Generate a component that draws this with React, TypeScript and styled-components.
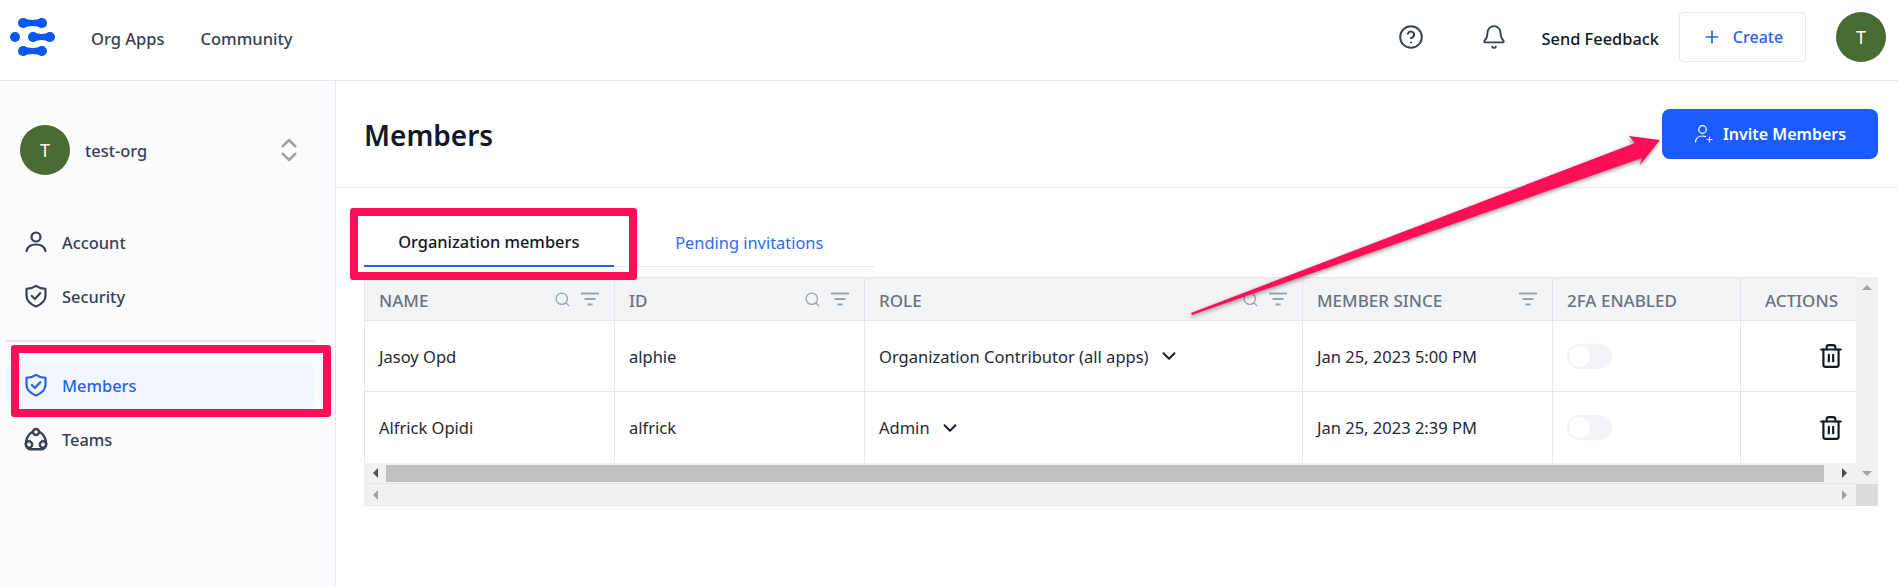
import React from 'react';
import styled, { createGlobalStyle } from 'styled-components';
import { Bell, ChevronDown, ChevronsUpDown, CircleHelp, Plus, Search, Trash2 } from 'lucide-react';

const GlobalStyle = createGlobalStyle`
  html, body {
    margin: 0;
    padding: 0;
    height: 100%;
    overflow: hidden;
    background: #ffffff;
    font-family: 'Noto Sans', 'Liberation Sans', sans-serif;
  }
  * { box-sizing: border-box; }
`;

const Page = styled.div`
  position: relative;
  width: 1898px;
  height: 586px;
  display: flex;
  flex-direction: column;
  overflow: hidden;
`;

const TopBar = styled.header`
  flex: 0 0 81px;
  display: flex;
  align-items: center;
  border-bottom: 1px solid #e5e7eb;
  padding: 0 12px 6px 10px;
`;

const TopLink = styled.a`
  font-size: 16.5px;
  font-weight: 500;
  color: #374151;
  margin-right: 36px;
  padding-top: 2px;
`;

const LogoSlot = styled.div`
  width: 81px;
  height: 44px;
  display: flex;
  align-items: center;
`;

const Spacer = styled.div`
  flex: 1;
`;

const TopIcon = styled.div`
  width: 26px;
  height: 26px;
  color: #374151;
  margin-right: 57px;
  display: flex;
`;

const Feedback = styled.span`
  font-size: 16.4px;
  font-weight: 500;
  color: #111827;
  margin-left: -23px;
  margin-right: 20px;
  padding-top: 2px;
`;

const CreateButton = styled.button`
  width: 127px;
  height: 50px;
  border: 1px solid #e5e7eb;
  border-radius: 4px;
  background: #fff;
  color: #2563eb;
  font: 500 16px 'Noto Sans', sans-serif;
  display: flex;
  align-items: center;
  justify-content: center;
  gap: 11px;
  margin-right: 30px;
`;

const Avatar = styled.div`
  width: 50px;
  height: 50px;
  border-radius: 50%;
  background: #476b32;
  color: #fff;
  font-size: 18px;
  display: flex;
  align-items: center;
  justify-content: center;
  flex: none;
`;

const Body = styled.div`
  flex: 1;
  display: flex;
  min-height: 0;
`;

const Sidebar = styled.aside`
  flex: 0 0 336px;
  background: #fbfbfd;
  border-right: 1px solid #e5e7eb;
  padding: 44px 20px 0 6px;
`;

const OrgRow = styled.div`
  display: flex;
  align-items: center;
  margin: 0 0 43px 14px;
  color: #374151;
`;

const OrgName = styled.span`
  font-size: 16.4px;
  font-weight: 500;
  margin-left: 15px;
  flex: 1;
`;

const OrgSwitch = styled.div`
  color: #9ca3af;
  margin-right: 11px;
  display: flex;
`;

const NavItem = styled.a<{ $active?: boolean }>`
  height: 48px;
  margin-bottom: 6px;
  padding-left: 18px;
  display: flex;
  align-items: center;
  gap: 14px;
  font-size: 16.4px;
  font-weight: 500;
  border-radius: 12px;
  color: ${(p) => (p.$active ? '#2563eb' : '#374151')};
  background: ${(p) => (p.$active ? '#f2f6ff' : 'transparent')};
`;

const Divider = styled.hr`
  border: none;
  height: 2px;
  background: #e3e3ee;
  margin: 20px 0 19px;
`;

const Main = styled.main`
  flex: 1;
  min-width: 0;
`;

const MainHeader = styled.div`
  height: 107px;
  border-bottom: 1px solid #e5e7eb;
  padding: 28px 20px 0 28px;
  display: flex;
  align-items: flex-start;
  justify-content: space-between;
`;

const Title = styled.h1`
  margin: 0;
  font-size: 28px;
  font-weight: 600;
  line-height: 52px;
  color: #111827;
`;

const InviteButton = styled.button`
  width: 216px;
  height: 50px;
  border: none;
  border-radius: 8px;
  background: #1c5cff;
  color: #fff;
  font: 600 16px 'Noto Sans', sans-serif;
  display: flex;
  align-items: center;
  justify-content: center;
  gap: 9px;
`;

const Content = styled.div`
  padding: 35px 20px 0 28px;
`;

const Tabs = styled.div`
  width: 510px;
  height: 44px;
  display: flex;
  gap: 11px;
  border-bottom: 1px solid #e5e7eb;
`;

const Tab = styled.div<{ $active?: boolean }>`
  width: 250px;
  height: 44px;
  padding-bottom: 6px;
  display: flex;
  align-items: center;
  justify-content: center;
  font-size: 16.4px;
  font-weight: ${(p) => (p.$active ? 500 : 400)};
  color: ${(p) => (p.$active ? '#111827' : '#2f6bf5')};
  border-bottom: ${(p) => (p.$active ? '2px solid #2563eb' : 'none')};
`;

const TableShell = styled.div`
  margin-top: 10px;
  display: grid;
  grid-template-columns: 1492px 22px;
  grid-template-rows: 207px 22px;
  width: 1514px;
`;

const TableArea = styled.div`
  display: flex;
  flex-direction: column;
`;

const columns = '250px 250px 438px 250px 188px 116px';

const HeadRow = styled.div`
  height: 44px;
  display: grid;
  grid-template-columns: ${columns};
  background: #f3f4f6;
  border-top: 1px solid #e5e7eb;
  border-bottom: 1px solid #e5e7eb;
`;

const HeadCell = styled.div<{ $right?: boolean }>`
  display: flex;
  align-items: center;
  gap: 10px;
  padding: 2px 15px 0 14px;
  font-size: 17px;
  font-weight: 500;
  color: #6b7280;
  border-left: 1px solid #e5e7eb;
  justify-content: ${(p) => (p.$right ? 'flex-end' : 'flex-start')};
  padding-right: ${(p) => (p.$right ? '18px' : '15px')};
`;

const HeadLabel = styled.span`
  flex: 1 1 auto;
`;

const HeadTools = styled.div`
  display: flex;
  align-items: center;
  gap: 10px;
  margin-top: -2px;
  color: #9ca3af;
`;

const Row = styled.div`
  height: 71px;
  display: grid;
  grid-template-columns: ${columns};
  border-bottom: 1px solid #e5e7eb;
`;

const LastRow = styled(Row)`
  border-bottom: none;
`;

const Cell = styled.div<{ $right?: boolean }>`
  display: flex;
  align-items: center;
  gap: 9px;
  padding: 0 14px;
  font-size: 16.5px;
  color: #1f2937;
  border-left: 1px solid #e5e7eb;
  justify-content: ${(p) => (p.$right ? 'flex-end' : 'flex-start')};
  padding-right: ${(p) => (p.$right ? '12px' : '14px')};
`;

const Toggle = styled.span`
  width: 45px;
  height: 25px;
  border-radius: 13px;
  background: #f3f4f7;
  display: flex;
  align-items: center;
  padding-left: 2px;
`;

const ToggleKnob = styled.span`
  width: 21px;
  height: 21px;
  border-radius: 50%;
  background: #fff;
`;

const HScroll = styled.div<{ $empty?: boolean }>`
  height: ${(p) => (p.$empty ? '22px' : '21px')};
  background: #f1f1f1;
  display: flex;
  align-items: center;
  justify-content: space-between;
  padding: 0 9px 0 9px;
  border-bottom: 1px solid #e5e7eb;
`;

const ScrollThumb = styled.div`
  height: 17px;
  flex: 1;
  background: #c1c1c1;
  margin: 0 18px 0 8px;
`;

const Arrow = styled.span<{ $dir: 'left' | 'right' | 'up' | 'down'; $pale?: boolean }>`
  width: 0;
  height: 0;
  flex: none;
  border: 5px solid transparent;
  ${(p) => {
    const c = p.$pale ? '#a3a3a3' : '#505050';
    if (p.$dir === 'left') return `border-left: none; border-right-color: ${c};`;
    if (p.$dir === 'right') return `border-right: none; border-left-color: ${c};`;
    if (p.$dir === 'up') return `border-top: none; border-bottom-color: ${c};`;
    return `border-bottom: none; border-top-color: ${c};`;
  }}
`;

const VScroll = styled.div`
  background: #f1f1f1;
  display: flex;
  flex-direction: column;
  align-items: center;
  justify-content: space-between;
  padding: 8px 0;
`;

const Corner = styled.div`
  background: #dcdcdc;
`;

// red marks the author drew over the screenshot
const MarkBox = styled.div<{ $x: number; $y: number; $w: number; $h: number }>`
  position: absolute;
  left: ${(p) => p.$x}px;
  top: ${(p) => p.$y}px;
  width: ${(p) => p.$w}px;
  height: ${(p) => p.$h}px;
  border: 8px solid #ff0f57;
  border-radius: 3px;
`;

const MarkArrow = styled.svg`
  position: absolute;
  left: 0;
  top: 0;
  filter: drop-shadow(-1px 2px 2px rgba(0, 0, 0, 0.45));
`;

const Dumbbell = ({ a, b, y }: { a: number; b: number; y: number }) => (
  <>
    <circle cx={a} cy={y} r="5" />
    <circle cx={b} cy={y} r="5" />
    <path d={`M${a} ${y - 5}Q${(a + b) / 2} ${y - 1} ${b} ${y - 5}V${y + 5}Q${(a + b) / 2} ${y + 1} ${a} ${y + 5}Z`} />
  </>
);

const Logo = () => (
  <svg width="46" height="38" viewBox="0 0 46 38" fill="#0b57f5">
    <Dumbbell a={13} b={32} y={5} />
    <circle cx="5" cy="19" r="5" />
    <Dumbbell a={23} b={40} y={19} />
    <Dumbbell a={13} b={32} y={33} />
  </svg>
);

const UserIcon = () => (
  <svg width="24" height="24" viewBox="0 0 24 24" fill="none" stroke="currentColor" strokeWidth="2.2" strokeLinecap="round">
    <circle cx="12" cy="7" r="4.5" />
    <path d="M2.500 21c1-4.500 4.500-6.500 9.500-6.500s8.500 2 9.500 6.500" />
  </svg>
);

const ShieldIcon = () => (
  <svg width="24" height="24" viewBox="0 0 24 24" fill="none" stroke="currentColor" strokeWidth="2.2" strokeLinecap="round" strokeLinejoin="round">
    <path d="M12 1.800C14.500 3.600 17.800 4.600 21.500 4.800V11.500C21.500 16.800 17.500 20.300 12 22.500C6.500 20.300 2.500 16.800 2.500 11.500V4.800C6.200 4.600 9.500 3.600 12 1.800Z" />
    <path d="M7.800 12l3 3 5.400-5.800" />
  </svg>
);

const TeamsIcon = () => (
  <svg width="24" height="24" viewBox="0 0 24 24" fill="none" stroke="currentColor" strokeWidth="2.4">
    <circle cx="12" cy="5" r="3" />
    <circle cx="5" cy="17.500" r="3.200" />
    <circle cx="19" cy="17.500" r="3.200" />
    <path d="M9 4.500C5.500 6.500 2 11 1.800 17c.1 3 2 5.200 4.700 5.200h11c2.700 0 4.600-2.200 4.700-5.200C22 11 18.500 6.500 15 4.500" />
  </svg>
);

const InviteIcon = () => (
  <svg width="20" height="20" viewBox="0 0 20 20" fill="none" stroke="currentColor" strokeWidth="1.2" strokeLinecap="round">
    <circle cx="8.500" cy="5.500" r="3.800" />
    <path d="M1.500 18c.3-4 3-6 7-6 1 0 2 .1 3 .5M15.500 13v5M13 15.500h5" />
  </svg>
);

const FilterIcon = () => (
  <svg width="18" height="14" viewBox="0 0 18 14" fill="none" stroke="currentColor" strokeWidth="2">
    <path d="M0 1.500h18M3.500 7h11M6.500 12.500h5" />
  </svg>
);

const tools = (search: boolean) => (
  <HeadTools>
    {search && <Search size={17} strokeWidth={1.8} />}
    <FilterIcon />
  </HeadTools>
);

const members = [
  { name: 'Jasoy Opd', id: 'alphie', role: 'Organization Contributor (all apps)', since: 'Jan 25, 2023 5:00 PM' },
  { name: 'Alfrick Opidi', id: 'alfrick', role: 'Admin', since: 'Jan 25, 2023 2:39 PM' },
];

const App: React.FC = () => (
  <Page>
    <GlobalStyle />
    <TopBar>
      <LogoSlot><Logo /></LogoSlot>
      <TopLink>Org Apps</TopLink>
      <TopLink>Community</TopLink>
      <Spacer />
      <TopIcon><CircleHelp size={26} strokeWidth={1.8} /></TopIcon>
      <TopIcon><Bell size={26} strokeWidth={1.7} /></TopIcon>
      <Feedback>Send Feedback</Feedback>
      <CreateButton><Plus size={20} strokeWidth={2} />Create</CreateButton>
      <Avatar>T</Avatar>
    </TopBar>
    <Body>
      <Sidebar>
        <OrgRow>
          <Avatar>T</Avatar>
          <OrgName>test-org</OrgName>
          <OrgSwitch><ChevronsUpDown size={30} strokeWidth={2} /></OrgSwitch>
        </OrgRow>
        <NavItem><UserIcon />Account</NavItem>
        <NavItem><ShieldIcon />Security</NavItem>
        <Divider />
        <NavItem $active><ShieldIcon />Members</NavItem>
        <NavItem><TeamsIcon />Teams</NavItem>
      </Sidebar>
      <Main>
        <MainHeader>
          <Title>Members</Title>
          <InviteButton><InviteIcon />Invite Members</InviteButton>
        </MainHeader>
        <Content>
          <Tabs>
            <Tab $active>Organization members</Tab>
            <Tab>Pending invitations</Tab>
          </Tabs>
          <TableShell>
            <TableArea>
              <HeadRow>
                <HeadCell><HeadLabel>NAME</HeadLabel>{tools(true)}</HeadCell>
                <HeadCell><HeadLabel>ID</HeadLabel>{tools(true)}</HeadCell>
                <HeadCell><HeadLabel>ROLE</HeadLabel>{tools(true)}</HeadCell>
                <HeadCell><HeadLabel>MEMBER SINCE</HeadLabel>{tools(false)}</HeadCell>
                <HeadCell>2FA ENABLED</HeadCell>
                <HeadCell $right>ACTIONS</HeadCell>
              </HeadRow>
              {members.map((m, i) => {
                const R = i === members.length - 1 ? LastRow : Row;
                return (
                  <R key={m.id}>
                    <Cell>{m.name}</Cell>
                    <Cell>{m.id}</Cell>
                    <Cell>{m.role}<ChevronDown size={22} strokeWidth={2} color="#111827" /></Cell>
                    <Cell>{m.since}</Cell>
                    <Cell><Toggle><ToggleKnob /></Toggle></Cell>
                    <Cell $right><Trash2 size={26} strokeWidth={2} color="#111827" /></Cell>
                  </R>
                );
              })}
              <HScroll>
                <Arrow $dir="left" />
                <ScrollThumb />
                <Arrow $dir="right" />
              </HScroll>
            </TableArea>
            <VScroll>
              <Arrow $dir="up" $pale />
              <Arrow $dir="down" $pale />
            </VScroll>
            <HScroll $empty>
              <Arrow $dir="left" $pale />
              <Arrow $dir="right" $pale />
            </HScroll>
            <Corner />
          </TableShell>
        </Content>
      </Main>
    </Body>
    <MarkBox $x={11} $y={345} $w={320} $h={72} />
    <MarkBox $x={350} $y={208} $w={287} $h={72} />
    <MarkArrow width="1898" height="586">
      <polygon points="1191,313 1635,143 1629,136 1660,140 1640,165 1642,158 1192,315" fill="#ff0f57" />
    </MarkArrow>
  </Page>
);

export default App;
